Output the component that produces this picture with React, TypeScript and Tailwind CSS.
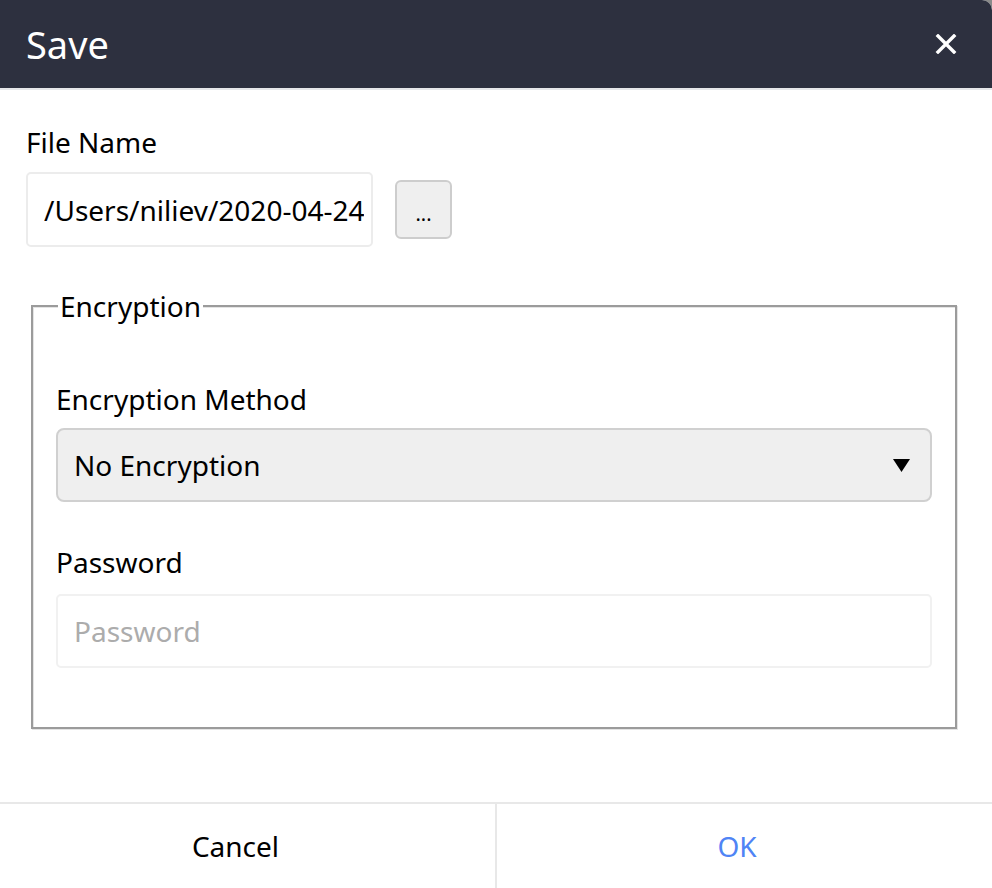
export default function App() {
  return (
    <div className="min-h-[888px] w-[992px] bg-[#8a8a8a] font-['Noto_Sans',sans-serif] text-black">
      <div className="flex min-h-[888px] flex-col overflow-hidden rounded-tr-[10px] bg-white">
        {/* Header */}
        <div className="flex h-[90px] items-center justify-between border-b-2 border-[#e6e7ea] bg-[#2d303f] pl-[26px] pr-[34px]">
          <h1 className="text-[38px] leading-none text-white">Save</h1>
          <button className="flex h-[24px] w-[24px] items-center justify-center">
            <svg width="22" height="20" viewBox="0 0 22 20" fill="none">
              <path d="M3 2 L19 18 M19 2 L3 18" stroke="white" strokeWidth="3.4" strokeLinecap="square" />
            </svg>
          </button>
        </div>

        {/* Body */}
        <div className="flex flex-1 flex-col px-[26px] pt-[34px]">
          <label className="text-[28px] leading-[36px]">File Name</label>
          <div className="mt-[12px] flex items-start gap-[22px]">
            <div className="flex h-[75px] w-[347px] items-center rounded-[5px] border-2 border-[#ececec] pl-[16px] pr-[7px]">
              <span className="block min-w-0 flex-1 overflow-hidden whitespace-nowrap text-[28px]">/Users/niliev/2020-04-24.kdbx</span>
            </div>
            <button className="mt-[8px] flex h-[59px] w-[57px] items-end justify-center rounded-[6px] border-2 border-[#cdcdcd] bg-[#efefef] pb-[12px]">
              <span className="text-[20px] leading-[22px]">...</span>
            </button>
          </div>

          <fieldset className="ml-[5px] mt-[44px] w-[926px] border-2 border-[#9b9b9b] px-[23px] pb-[59px] pt-[60px] shadow-[1px_1px_0_#e4e4e4,inset_1px_1px_0_#e4e4e4]">
            <legend className="ml-[2px] bg-white px-[2px] text-[28px] leading-[30px]">Encryption</legend>
            <label className="block text-[28px] leading-[36px]">Encryption Method</label>
            <div className="mt-[11px] flex h-[74px] items-center justify-between rounded-[8px] border-2 border-[#d0d0d0] bg-[#efefef] pl-[16px] pr-[20px]">
              <span className="text-[28px]">No Encryption</span>
              <svg width="17" height="13" viewBox="0 0 17 13">
                <path d="M0 0 H17 L8.5 13 Z" fill="black" />
              </svg>
            </div>
            <label className="mt-[42px] block text-[28px] leading-[36px]">Password</label>
            <div className="mt-[14px] flex h-[74px] items-center rounded-[5px] border-2 border-[#f1f1f1] pl-[16px]">
              <span className="text-[28px] text-[#acacac]">Password</span>
            </div>
          </fieldset>
        </div>

        {/* Footer */}
        <div className="mt-auto flex h-[86px] border-t-2 border-[#e8e8e8]">
          <button className="flex w-[495px] items-center justify-center pr-[24px] text-[28px] text-black">Cancel</button>
          <div className="w-[2px] bg-[#e8e8e8]" />
          <button className="flex flex-1 items-center justify-center pr-[15px] text-[28px] text-[#4f84f5]">OK</button>
        </div>
      </div>
    </div>
  );
}
